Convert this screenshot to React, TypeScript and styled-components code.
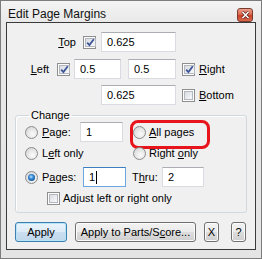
import React from "react";
import styled, { createGlobalStyle } from "styled-components";

const Global = createGlobalStyle`
  html, body { margin: 0; padding: 0; background: #e6e6e6; }
  body { font-family: "Liberation Sans", Arial, sans-serif; font-size: 11px; color: #000; }
  * { box-sizing: border-box; }
`;

const Window = styled.div`
  width: 262px;
  height: 259px;
  border: 1px solid #7c7c7c;
  background: linear-gradient(#f4f4f4 0px, #e8e8e8 22px, #e4e4e4 100%);
  display: flex;
  flex-direction: column;
`;

const TitleBar = styled.div`
  height: 21px;
  display: flex;
  align-items: flex-start;
  padding: 0 8px 0 7px;
`;

const TitleText = styled.span`
  font-family: "Liberation Sans", Arial, sans-serif;
  font-size: 12px;
  line-height: 14px;
  margin-top: 6px;
  color: #111;
`;

const CloseButton = styled.div`
  margin-left: auto;
  margin-top: 7px;
  width: 16px;
  height: 14px;
  border: 1px solid #7a3a2e;
  border-radius: 3px;
  background: linear-gradient(#eba08e 0%, #dd6a50 45%, #c8412a 55%, #d86a4c 100%);
  display: flex;
  align-items: center;
  justify-content: center;
`;

const Client = styled.div`
  flex: 1;
  margin: 0 5px 8px 5px;
  border: 1px solid #3a3a3a;
  background: #f0f0f0;
  display: flex;
  flex-direction: column;
  padding-top: 9px;
`;

const Row = styled.div<{ $top?: number; $left?: number; $h?: number }>`
  display: flex;
  align-items: center;
  height: ${(p) => p.$h ?? 20}px;
  margin-top: ${(p) => p.$top ?? 0}px;
  padding-left: ${(p) => p.$left ?? 0}px;
`;

const LabelCell = styled.span<{ $w: number }>`
  width: ${(p) => p.$w}px;
  text-align: right;
  flex: none;
`;

const Label = styled.span<{ $ml?: number; $w?: number }>`
  margin-left: ${(p) => p.$ml ?? 0}px;
  ${(p) => (p.$w ? `width: ${p.$w}px; flex: none;` : "")}
  white-space: nowrap;
  line-height: 13px;
`;

const Field = styled.div<{ $w: number; $ml?: number; $focus?: boolean }>`
  width: ${(p) => p.$w}px;
  height: 20px;
  margin-left: ${(p) => p.$ml ?? 0}px;
  flex: none;
  background: #fff;
  border: 1px solid ${(p) => (p.$focus ? "#6aa7e0" : "#d9dbe0")};
  border-top-color: ${(p) => (p.$focus ? "#3d7ec2" : "#abadb3")};
  display: flex;
  align-items: center;
  padding-left: 5px;
  font-size: 11px;
`;

const Caret = styled.span`
  display: inline-block;
  width: 1px;
  height: 13px;
  background: #000;
  margin-left: 1px;
`;

const CheckBox = styled.span<{ $ml?: number }>`
  width: 13px;
  height: 13px;
  flex: none;
  margin-left: ${(p) => p.$ml ?? 0}px;
  border: 1px solid #8e8f8f;
  background: #fdfdfd;
  padding: 1px;
  display: flex;
`;

const CheckInner = styled.span`
  flex: 1;
  border: 1px solid #b4b8be;
  background: linear-gradient(135deg, #d9dce2 0%, #eef0f3 70%, #f8f8f9 100%);
  position: relative;
  display: flex;
  align-items: center;
  justify-content: center;
`;

const Radio = styled.span<{ $checked?: boolean }>`
  width: 13px;
  height: 13px;
  flex: none;
  border-radius: 50%;
  border: 1px solid #8b8c8e;
  background: radial-gradient(circle at 60% 65%, #fbfbfb 0%, #e4e4e4 55%, #c9cacc 100%);
  display: flex;
  align-items: center;
  justify-content: center;
  &::after {
    content: "";
    display: ${(p) => (p.$checked ? "block" : "none")};
    width: 7px;
    height: 7px;
    border-radius: 50%;
    background: radial-gradient(circle at 45% 40%, #b9e3ff 0%, #3d8fd8 35%, #0c4d94 80%, #163c6c 100%);
  }
`;

const Group = styled.fieldset`
  margin: 4px 8px 0 8px;
  padding: 0 0 0 9px;
  border: 1px solid #d2d9de;
  border-radius: 3px;
  box-shadow: inset 1px 1px 0 #fff;
  height: 104px;
`;

const Legend = styled.legend`
  margin-left: 4px;
  padding: 0 2px;
  line-height: 13px;
  font-size: 11px;
`;

const Options = styled.div`
  display: grid;
  grid-template-columns: 108px 1fr;
  grid-template-rows: 20px 23px;
  align-items: center;
`;

const Option = styled.div`
  display: flex;
  align-items: center;
  position: relative;
`;

const Highlight = styled.div`
  position: absolute;
  left: -3px;
  top: -6px;
  width: 80px;
  height: 29px;
  border: 3px solid #e8141c;
  border-radius: 8px;
  pointer-events: none;
`;

const ButtonRow = styled.div`
  display: flex;
  align-items: center;
  margin-top: 9px;
  padding-left: 8px;
`;

const Btn = styled.button<{ $w: number; $ml?: number; $default?: boolean }>`
  width: ${(p) => p.$w}px;
  height: 20px;
  margin: 0 0 0 ${(p) => p.$ml ?? 0}px;
  padding: 0;
  font-family: "Liberation Sans", Arial, sans-serif;
  font-size: 11px;
  color: #000;
  border: 1px solid ${(p) => (p.$default ? "#3c7fb1" : "#707070")};
  border-radius: 3px;
  background: ${(p) =>
    p.$default
      ? "linear-gradient(#eaf4fc 0%, #dcebf7 48%, #c9def0 52%, #c0d7ea 100%)"
      : "linear-gradient(#f2f2f2 0%, #ebebeb 48%, #dddddd 52%, #cfcfcf 100%)"};
  box-shadow: inset 0 0 0 1px ${(p) => (p.$default ? "#b6e4f8" : "#fbfbfb")};
`;

const CheckMark = () => (
  <svg width="9" height="9" viewBox="0 0 9 9">
    <path d="M1.2 4.6 L3.4 7 L7.8 1.2" fill="none" stroke="#3e5596" strokeWidth="1.8" />
  </svg>
);

const Check = ({ checked, ml }: { checked?: boolean; ml?: number }) => (
  <CheckBox $ml={ml}>
    <CheckInner>{checked && <CheckMark />}</CheckInner>
  </CheckBox>
);

export default function App() {
  return (
    <>
      <Global />
      <Window>
        <TitleBar>
          <TitleText>Edit Page Margins</TitleText>
          <CloseButton>
            <svg width="9" height="8" viewBox="0 0 9 8">
              <path d="M1.5 1 L7.5 7 M7.5 1 L1.5 7" stroke="#5a2218" strokeWidth="3" />
              <path d="M1.5 1 L7.5 7 M7.5 1 L1.5 7" stroke="#ffffff" strokeWidth="1.6" />
            </svg>
          </CloseButton>
        </TitleBar>
        <Client>
          <Row>
            <LabelCell $w={69}>
              <u>T</u>op
            </LabelCell>
            <Check checked ml={7} />
            <Field $w={75} $ml={5}>0.625</Field>
          </Row>
          <Row $top={7}>
            <LabelCell $w={42}>
              <u>L</u>eft
            </LabelCell>
            <Check checked ml={8} />
            <Field $w={47} $ml={4}>0.5</Field>
            <Field $w={48} $ml={7}>0.5</Field>
            <Check checked ml={6} />
            <Label $ml={4}>
              <u>R</u>ight
            </Label>
          </Row>
          <Row $top={6} $left={94}>
            <Field $w={75}>0.625</Field>
            <Check ml={6} />
            <Label $ml={4}>
              <u>B</u>ottom
            </Label>
          </Row>
          <Group>
            <Legend>Change</Legend>
            <Options>
              <Option>
                <Radio />
                <Label $ml={4} $w={38}>
                  <u>P</u>age:
                </Label>
                <Field $w={43}>1</Field>
              </Option>
              <Option>
                <Highlight />
                <Radio />
                <Label $ml={3}>
                  <u>A</u>ll pages
                </Label>
              </Option>
              <Option>
                <Radio />
                <Label $ml={4}>
                  L<u>e</u>ft only
                </Label>
              </Option>
              <Option>
                <Radio />
                <Label $ml={3}>
                  Right <u>o</u>nly
                </Label>
              </Option>
            </Options>
            <Row $top={2}>
              <Radio $checked />
              <Label $ml={4} $w={41}>
                P<u>a</u>ges:
              </Label>
              <Field $w={43} $focus>
                1<Caret />
              </Field>
              <Label $ml={6} $w={30}>
                T<u>h</u>ru:
              </Label>
              <Field $w={42}>2</Field>
            </Row>
            <Row $top={4} $left={22} $h={15}>
              <Check />
              <Label $ml={3}>Adjust left or right only</Label>
            </Row>
          </Group>
          <ButtonRow>
            <Btn $w={52} $default>
              Apply
            </Btn>
            <Btn $w={121} $ml={8}>
              Apply to Parts/S<u>c</u>ore...
            </Btn>
            <Btn $w={15} $ml={8}>
              X
            </Btn>
            <Btn $w={15} $ml={12}>
              ?
            </Btn>
          </ButtonRow>
        </Client>
      </Window>
    </>
  );
}
